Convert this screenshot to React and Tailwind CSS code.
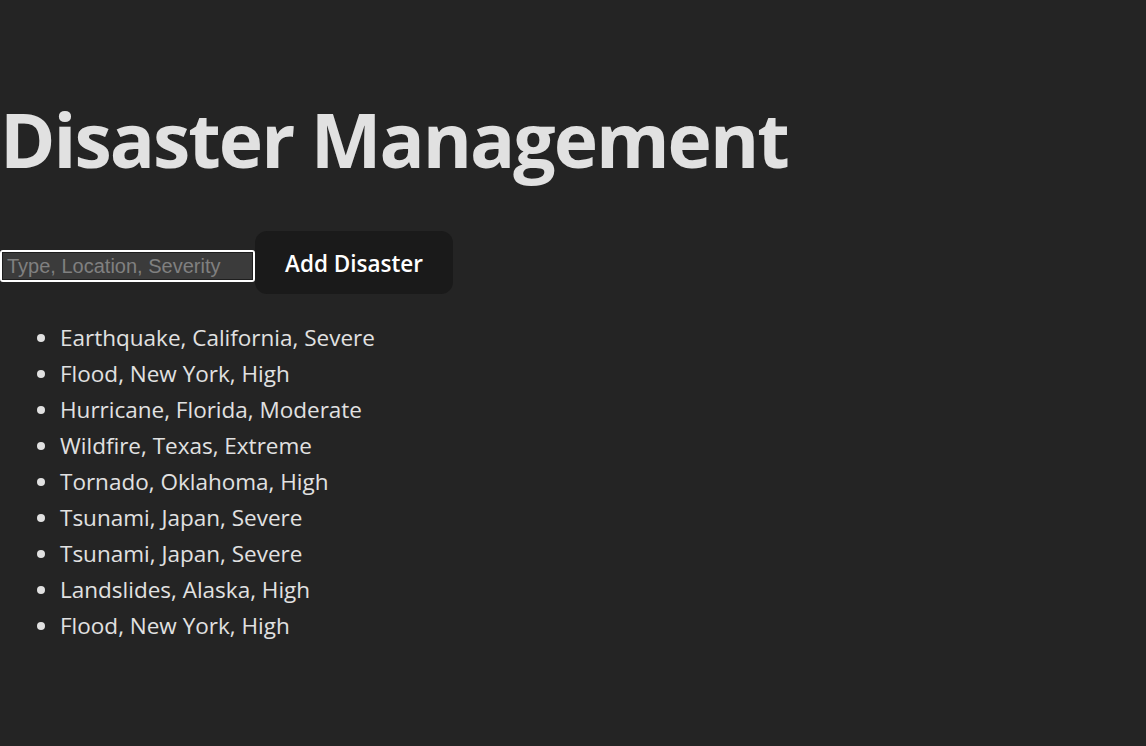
import { useState } from "react"

const initial = [
  "Earthquake, California, Severe",
  "Flood, New York, High",
  "Hurricane, Florida, Moderate",
  "Wildfire, Texas, Extreme",
  "Tornado, Oklahoma, High",
  "Tsunami, Japan, Severe",
  "Tsunami, Japan, Severe",
  "Landslides, Alaska, High",
  "Flood, New York, High",
]

export default function App() {
  const [items, setItems] = useState(initial)
  const [value, setValue] = useState("")

  const add = () => {
    if (!value.trim()) return
    setItems([...items, value.trim()])
    setValue("")
  }

  return (
    <div
      className="min-h-screen bg-[#242424] text-[#e1e1e1] pt-[98px]"
      style={{ fontFamily: '"Open Sans", "Noto Sans", sans-serif' }}
    >
      <h1 className="text-[75px] leading-[82px] font-bold tracking-[-2px]">Disaster Management</h1>

      <div className="flex items-start mt-[51px]">
        <div className="mt-[19px] w-[255px] h-[32px] border-2 border-white rounded-[3px]">
          <input
            value={value}
            onChange={(e) => setValue(e.target.value)}
            placeholder="Type, Location, Severity"
            className="w-full h-full bg-[#3b3b3b] border border-[#1e1e1e] px-[4px] text-[20px] text-white placeholder:text-[#808080] outline-none"
            style={{ fontFamily: '"Liberation Sans", Arial, sans-serif' }}
          />
        </div>
        <button
          onClick={add}
          className="h-[63px] px-[30px] pt-[3px] rounded-[12px] bg-[#1a1a1a] text-white text-[22.5px] font-semibold"
        >
          Add Disaster
        </button>
      </div>

      <ul className="list-disc pl-[60px] mt-[26px] text-[22.5px] leading-[36px]">
        {items.map((it, i) => (
          <li key={i}>{it}</li>
        ))}
      </ul>
    </div>
  )
}
